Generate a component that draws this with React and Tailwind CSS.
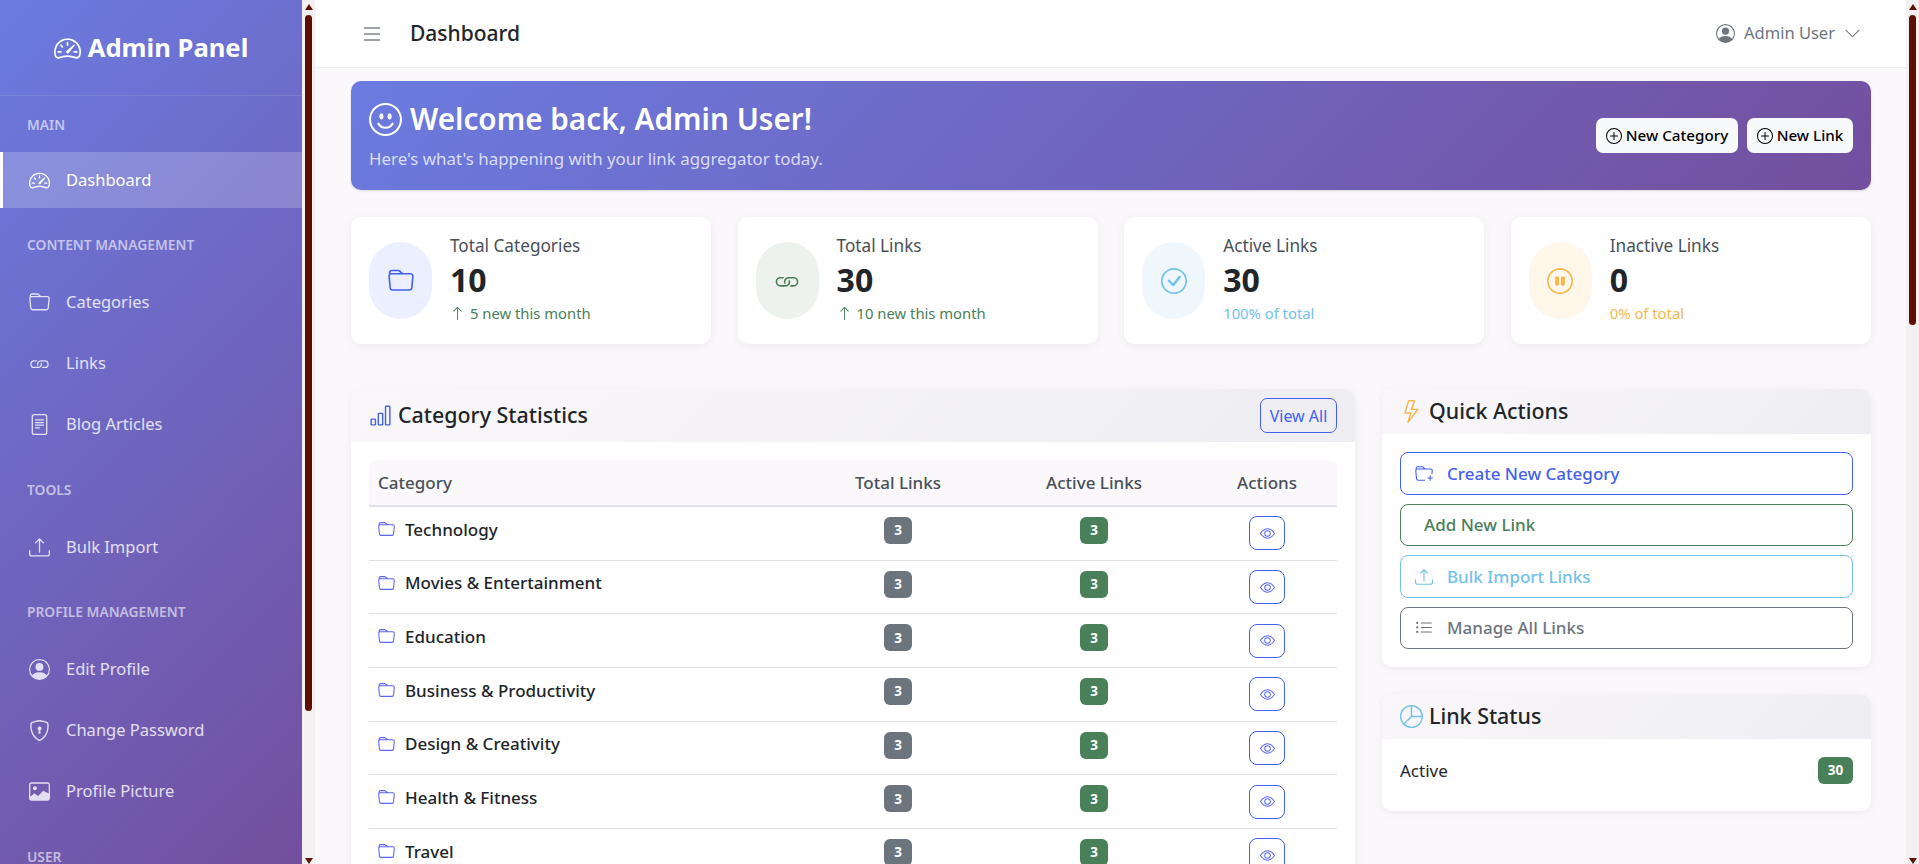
import React from "react";
import {
  BsSpeedometer2,
  BsFolder,
  BsLink,
  BsFileText,
  BsUpload,
  BsPersonCircle,
  BsShieldLock,
  BsImage,
  BsList,
  BsEmojiSmile,
  BsPlusCircle,
  BsCheckCircle,
  BsPauseCircle,
  BsArrowUp,
  BsBarChart,
  BsEye,
  BsFolderPlus,
  BsLightning,
  BsListUl,
  BsPieChart,
  BsChevronDown,
} from "react-icons/bs";

const categories = [
  "Technology",
  "Movies & Entertainment",
  "Education",
  "Business & Productivity",
  "Design & Creativity",
  "Health & Fitness",
  "Travel",
];

const stats = [
  {
    label: "Total Categories",
    value: "10",
    note: "5 new this month",
    arrow: true,
    Icon: BsFolder,
    circle: "bg-[#ebefff]",
    icon: "text-[#4361ee]",
    noteColor: "text-[#4a8059]",
  },
  {
    label: "Total Links",
    value: "30",
    note: "10 new this month",
    arrow: true,
    Icon: BsLink,
    circle: "bg-[#edf2ee]",
    icon: "text-[#4a8059]",
    noteColor: "text-[#4a8059]",
  },
  {
    label: "Active Links",
    value: "30",
    note: "100% of total",
    Icon: BsCheckCircle,
    circle: "bg-[#eff7fd]",
    icon: "text-[#72c2ea]",
    noteColor: "text-[#72c2ea]",
  },
  {
    label: "Inactive Links",
    value: "0",
    note: "0% of total",
    Icon: BsPauseCircle,
    circle: "bg-[#fef7ea]",
    icon: "text-[#f8b84e]",
    noteColor: "text-[#f8b84e]",
  },
];

const Scrollbar = ({ thumb }) => (
  <div className="w-[13px] shrink-0 h-full bg-[#f3f0f1] flex flex-col items-center relative">
    <svg width="8" height="6" viewBox="0 0 8 6" className="mt-[4px] fill-[#5e0f05]">
      <path d="M4 0L8 6H0Z" />
    </svg>
    <div className={`w-[7px] mt-[5px] rounded-full bg-[#5e0f05] ${thumb}`}></div>
    <svg width="8" height="6" viewBox="0 0 8 6" className="absolute bottom-0 fill-[#5e0f05]">
      <path d="M0 0H8L4 6Z" />
    </svg>
  </div>
);

const NavLabel = ({ children, className = "" }) => (
  <div className={`h-[20px] pl-[27px] text-[13.8px] leading-[20px] font-semibold text-white/60 ${className}`}>
    {children}
  </div>
);

const NavItem = ({ Icon, children, active }) => (
  <div
    className={`h-[56px] mb-[5px] flex items-center gap-[16px] text-[16.5px] ${
      active
        ? "bg-white/20 border-l-[3px] border-white text-white pl-[26px]"
        : "text-white/80 pl-[29px]"
    }`}
  >
    <Icon size={21} className="shrink-0" />
    <span>{children}</span>
  </div>
);

const Panel = ({ Icon, iconColor, title, titleGap, height, action, children, className = "" }) => (
  <div className={`bg-white rounded-[10px] shadow-[0_2px_10px_rgba(0,0,0,0.06)] overflow-hidden ${className}`}>
    <div className={`${height} px-[18px] flex items-center justify-between bg-[linear-gradient(135deg,#f9f7f9,#eeedf1)]`}>
      <div className={`flex items-center ${titleGap}`}>
        <Icon size={23} className={iconColor} />
        <h5 className="text-[21.4px] font-medium text-[#212529]">{title}</h5>
      </div>
      {action}
    </div>
    {children}
  </div>
);

const ActionBtn = ({ Icon, children, color, h = "h-[43px]" }) => (
  <button className={`${h} w-full px-[14px] flex items-center gap-[14px] rounded-[8px] border text-[17px] font-medium ${color}`}>
    {Icon && <Icon size={18} className="shrink-0" />}
    <span className={Icon ? "" : "pl-[9px]"}>{children}</span>
  </button>
);

export default function App() {
  return (
    <div className="h-screen w-full flex overflow-hidden bg-[#faf8fa] text-[#212529] font-['Noto_Sans',sans-serif]">
      {/* sidebar */}
      <aside className="w-[302px] shrink-0 h-full overflow-hidden bg-[linear-gradient(135deg,#6b7be0,#734f9e)]">
        <div className="h-[96px] pt-[2px] border-b border-white/10 flex items-center justify-center gap-[7px] text-white">
          <BsSpeedometer2 size={27} />
          <span className="text-[25.6px] font-bold">Admin Panel</span>
        </div>
        <NavLabel className="mt-[19px] mb-[17px]">MAIN</NavLabel>
        <NavItem Icon={BsSpeedometer2} active>Dashboard</NavItem>
        <NavLabel className="mt-[27px] mb-[19.5px]">CONTENT MANAGEMENT</NavLabel>
        <NavItem Icon={BsFolder}>Categories</NavItem>
        <NavItem Icon={BsLink}>Links</NavItem>
        <NavItem Icon={BsFileText}>Blog Articles</NavItem>
        <NavLabel className="mt-[27px] mb-[19.5px]">TOOLS</NavLabel>
        <NavItem Icon={BsUpload}>Bulk Import</NavItem>
        <NavLabel className="mt-[27px] mb-[19.5px]">PROFILE MANAGEMENT</NavLabel>
        <NavItem Icon={BsPersonCircle}>Edit Profile</NavItem>
        <NavItem Icon={BsShieldLock}>Change Password</NavItem>
        <NavItem Icon={BsImage}>Profile Picture</NavItem>
        <NavLabel className="mt-[27px]">USER</NavLabel>
      </aside>
      <Scrollbar thumb="h-[696px]" />

      {/* main */}
      <main className="flex-1 min-w-0 h-full overflow-hidden">
        <header className="h-[68px] bg-white border-b border-[#e9ecef] pl-[45px] pr-[45px] flex items-center justify-between">
          <div className="flex items-center gap-[26px]">
            <BsList size={24} className="text-[#7d858c]" />
            <h1 className="text-[21px] font-medium text-[#212529]">Dashboard</h1>
          </div>
          <div className="flex items-center gap-[9px] text-[#6c757d] text-[16.5px]">
            <BsPersonCircle size={19} />
            <span>Admin User</span>
            <BsChevronDown size={17} />
          </div>
        </header>

        <div className="pl-[36px] pr-[35px] pt-[13px]">
          {/* welcome banner */}
          <div className="h-[109px] rounded-[10px] bg-[linear-gradient(135deg,#6b7be0,#734f9e)] shadow-sm pl-[18px] pr-[18px] flex items-center justify-between text-white">
            <div className="pb-[3px]">
              <div className="flex items-center gap-[8px] h-[44px]">
                <BsEmojiSmile size={33} />
                <h2 className="text-[29.7px] font-semibold">Welcome back, Admin User!</h2>
              </div>
              <p className="mt-[6px] text-[16.9px] leading-[24px] text-white/75">
                Here's what's happening with your link aggregator today.
              </p>
            </div>
            <div className="flex items-center gap-[9px]">
              <button className="h-[35px] w-[142px] rounded-[7px] bg-[#f8f9fa] text-black text-[15.2px] font-medium flex items-center justify-center gap-[4px]">
                <BsPlusCircle size={16} />
                New Category
              </button>
              <button className="h-[35px] w-[106px] rounded-[7px] bg-[#f8f9fa] text-black text-[15.2px] font-medium flex items-center justify-center gap-[4px]">
                <BsPlusCircle size={16} />
                New Link
              </button>
            </div>
          </div>

          {/* stat cards */}
          <div className="mt-[27px] grid grid-cols-4 gap-[26.4px]">
            {stats.map((s) => (
              <div key={s.label} className="h-[127px] bg-white rounded-[10px] shadow-[0_2px_10px_rgba(0,0,0,0.06)] px-[18px] flex items-center gap-[18px]">
                <div className={`w-[63px] h-[77px] shrink-0 rounded-full flex items-center justify-center ${s.circle}`}>
                  <s.Icon size={26} className={s.icon} />
                </div>
                <div className="pb-[3px]">
                  <div className="text-[17.2px] leading-[24px] text-[#495057]">{s.label}</div>
                  <div className="text-[32px] leading-[44px] font-bold text-[#212529]">{s.value}</div>
                  <div className={`text-[14.8px] leading-[22px] flex items-center gap-[5px] ${s.noteColor}`}>
                    {s.arrow && <BsArrowUp size={15} />}
                    {s.note}
                  </div>
                </div>
              </div>
            ))}
          </div>

          <div className="mt-[45px] flex items-start gap-[27px]">
            {/* category statistics */}
            <Panel
              Icon={BsBarChart}
              iconColor="text-[#4361ee]"
              title="Category Statistics"
              titleGap="gap-[6px]"
              height="h-[53px]"
              className="w-[1004px] shrink-0"
              action={
                <button className="w-[77px] h-[35px] rounded-[7px] border border-[#4361ee] text-[#4361ee] text-[16px]">
                  View All
                </button>
              }
            >
              <div className="px-[18px] pt-[18px]">
                <div className="h-[47px] grid grid-cols-[436px_186px_206px_140px] items-center bg-[#faf8fa] rounded-t-[8px] border-b-2 border-[#dee2e6] text-[17px] font-medium text-[#495057] text-center">
                  <div className="text-left pl-[9px]">Category</div>
                  <div>Total Links</div>
                  <div>Active Links</div>
                  <div>Actions</div>
                </div>
                {categories.map((c) => (
                  <div key={c} className="h-[53.7px] grid grid-cols-[436px_186px_206px_140px] items-center border-b border-[#dee2e6]">
                    <div className="pl-[9px] pb-[8px] flex items-center gap-[10px] text-[17px] font-medium text-[#212529]">
                      <BsFolder size={17} className="text-[#5b66f0]" />
                      {c}
                    </div>
                    <div className="pb-[6px] flex justify-center">
                      <span className="w-[28px] h-[27px] rounded-[6px] bg-[#6c757d] text-white text-[13.5px] font-bold flex items-center justify-center">3</span>
                    </div>
                    <div className="pb-[6px] flex justify-center">
                      <span className="w-[28px] h-[27px] rounded-[6px] bg-[#4a8059] text-white text-[13.5px] font-bold flex items-center justify-center">3</span>
                    </div>
                    <div className="flex justify-center">
                      <button className="w-[36px] h-[34px] rounded-[8px] border border-[#4361ee] text-[#5b66f0] flex items-center justify-center">
                        <BsEye size={15} />
                      </button>
                    </div>
                  </div>
                ))}
              </div>
            </Panel>

            {/* right column */}
            <div className="flex-1 min-w-0 flex flex-col gap-[27px]">
              <Panel
                Icon={BsLightning}
                iconColor="text-[#f8b84e]"
                title="Quick Actions"
                titleGap="gap-[6px]"
                height="h-[45px]"
              >
                <div className="p-[18px] flex flex-col gap-[9px]">
                  <ActionBtn Icon={BsFolderPlus} color="border-[#4361ee] text-[#4361ee]">Create New Category</ActionBtn>
                  <ActionBtn color="border-[#4a8059] text-[#4a8059]" h="h-[42px]">Add New Link</ActionBtn>
                  <ActionBtn Icon={BsUpload} color="border-[#72c2ea] text-[#72c2ea]">Bulk Import Links</ActionBtn>
                  <ActionBtn Icon={BsListUl} color="border-[#6c757d] text-[#6c757d]" h="h-[42px]">Manage All Links</ActionBtn>
                </div>
              </Panel>

              <Panel
                Icon={BsPieChart}
                iconColor="text-[#72c2ea]"
                title="Link Status"
                titleGap="gap-[6px]"
                height="h-[45px]"
              >
                <div className="h-[72px] px-[18px] pt-[18px]">
                  <div className="flex items-center justify-between">
                    <span className="text-[17px]">Active</span>
                    <span className="w-[35px] h-[27px] rounded-[6px] bg-[#4a8059] text-white text-[13.5px] font-bold flex items-center justify-center">30</span>
                  </div>
                </div>
              </Panel>
            </div>
          </div>
        </div>
      </main>
      <Scrollbar thumb="h-[310px]" />
    </div>
  );
}
